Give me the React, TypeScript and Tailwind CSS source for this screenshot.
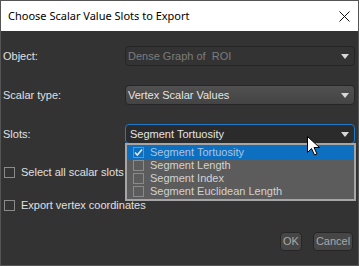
import React from 'react'

const body = { fontFamily: '"Liberation Sans", Arial, sans-serif' }
const title = { fontFamily: '"Noto Sans", "Open Sans", sans-serif' }

function Arrow() {
  return (
    <svg width="8" height="5" viewBox="0 0 8 5" className="flex-shrink-0">
      <path d="M0 0h8L4 5z" fill="#d8d8d8" />
    </svg>
  )
}

function Check({ checked }: { checked?: boolean }) {
  return (
    <span className="w-[11px] h-[11px] border border-[#8a8a8a] bg-transparent flex items-center justify-center flex-shrink-0">
      {checked && (
        <svg width="9" height="9" viewBox="0 0 9 9">
          <path d="M1 4.5l2.3 2.5L8 1.5" fill="none" stroke="#e8e8e8" strokeWidth="1.6" />
        </svg>
      )}
    </span>
  )
}

const slots = ['Segment Tortuosity', 'Segment Length', 'Segment Index', 'Segment Euclidean Length']

export default function App() {
  return (
    <div className="w-[359px] h-[266px] bg-[#333333] border border-[#555555] flex flex-col relative overflow-hidden" style={body}>
      {/* Title bar */}
      <div className="h-[30px] bg-white flex items-center justify-between pl-[7px] pr-[8px] flex-shrink-0">
        <span className="text-[11px] text-black" style={title}>Choose Scalar Value Slots to Export</span>
        <svg width="11" height="11" viewBox="0 0 11 11">
          <path d="M0.5 0.5l10 10M10.5 0.5l-10 10" stroke="#111" strokeWidth="1" />
        </svg>
      </div>

      <div className="flex-1 flex flex-col pl-[2px] pr-[3px] pt-[15px] text-[11px] text-[#e0e0e0]">
        <div className="flex items-center h-[20px]">
          <span className="w-[122px]">Object:</span>
          <div className="flex-1 h-[20px] rounded-[4px] border border-[#262626] bg-[#333333] flex items-center justify-between pl-[2px] pr-[5px] text-[#7c7c7c]">
            <span>Dense Graph of&nbsp; ROI</span>
            <Arrow />
          </div>
        </div>

        <div className="flex items-center h-[20px] mt-[19px]">
          <span className="w-[122px]">Scalar type:</span>
          <div className="flex-1 h-[20px] rounded-[4px] border border-[#262626] bg-gradient-to-b from-[#505050] to-[#444444] flex items-center justify-between pl-[2px] pr-[5px] text-[#e4e4e4]">
            <span>Vertex Scalar Values</span>
            <Arrow />
          </div>
        </div>

        <div className="flex items-center h-[20px] mt-[19px]">
          <span className="w-[122px]">Slots:</span>
          <div className="flex-1 h-[20px] rounded-[4px] border border-[#1f78c8] bg-[#2b2b2b] flex items-center justify-between pl-[4px] pr-[5px] text-[#e4e4e4]">
            <span>Segment Tortuosity</span>
            <Arrow />
          </div>
        </div>

        <div className="flex items-center gap-[6px] mt-[21px] h-[14px] pl-[1px]">
          <Check />
          <span>Select all scalar slots</span>
        </div>

        <div className="flex items-center gap-[6px] mt-[19px] h-[14px] pl-[1px]">
          <Check />
          <span>Export vertex coordinates</span>
        </div>

        <div className="flex justify-end gap-[11px] mt-[20px] pr-[2px]">
          <button className="w-[22px] h-[19px] rounded-[4px] border border-[#262626] bg-[#464646] text-[#a8a8a8] text-[11px]">OK</button>
          <button className="w-[40px] h-[19px] rounded-[4px] border border-[#262626] bg-[#464646] text-[#a8a8a8] text-[11px]">Cancel</button>
        </div>
      </div>

      {/* Popup list */}
      <div className="absolute left-[124px] top-[142px] w-[231px] border-2 border-[#a6a6a6] bg-[#5c5c5c] flex flex-col py-[1px] text-[11px]">
        {slots.map((s, i) => (
          <div
            key={s}
            className={
              i === 0
                ? 'h-[13px] flex items-center gap-[6px] pl-[6px] bg-[#0c6fc0] text-[#a9c6e6]'
                : 'h-[13px] flex items-center gap-[6px] pl-[6px] text-[#d2d2d2]'
            }
          >
            <Check checked={i === 0} />
            <span>{s}</span>
          </div>
        ))}
      </div>

      {/* Mouse cursor */}
      <svg className="absolute left-[306px] top-[135px]" width="13" height="20" viewBox="0 0 13 20">
        <path d="M0.5 0.5v16l4-4 3 6.5 2.5-1-3-6.5h5.5z" fill="#fff" stroke="#000" strokeWidth="1" />
      </svg>
    </div>
  )
}
